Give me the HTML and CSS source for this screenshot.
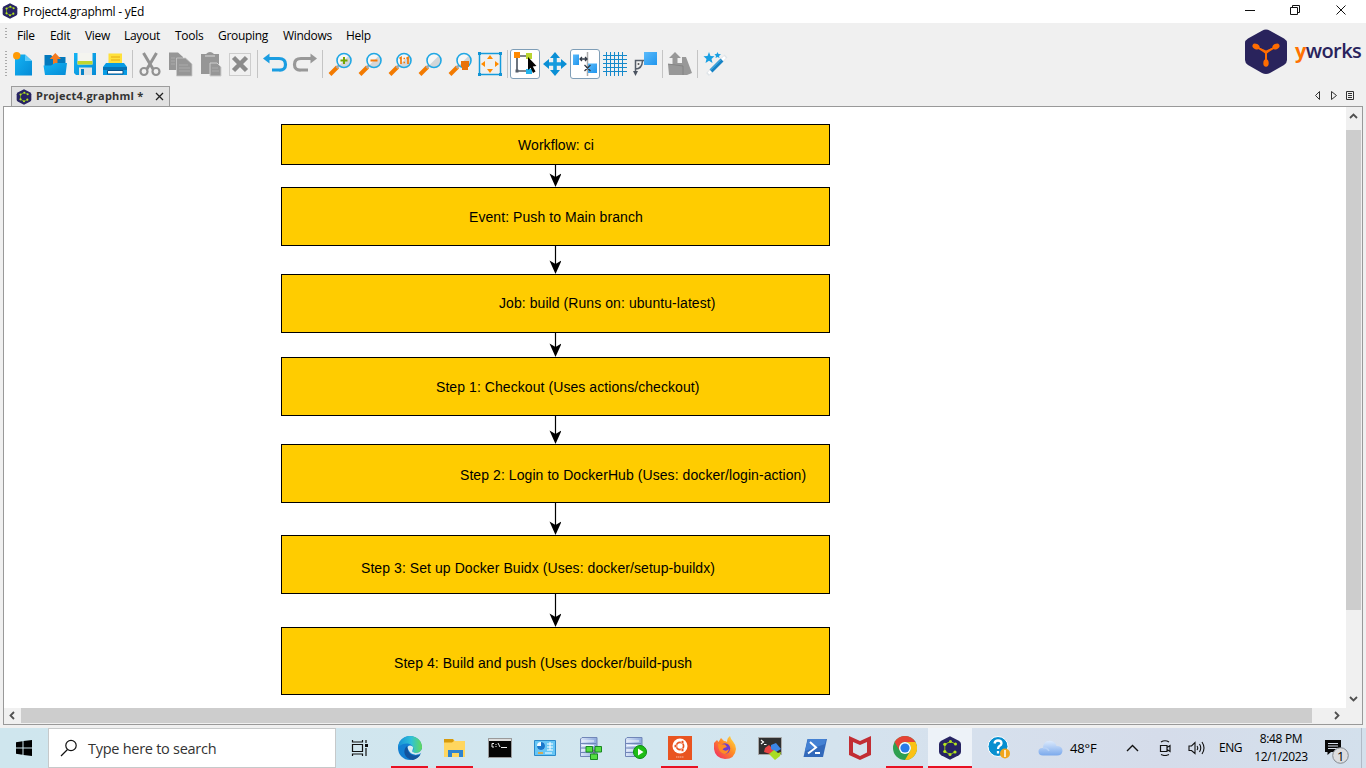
FILE: index.html
```
<!DOCTYPE html>
<html lang="en">
<head>
<meta charset="utf-8">
<title>Project4.graphml - yEd</title>
<link rel="stylesheet" href="styles.css">
</head>
<body>
<svg class="defs" width="0" height="0">
  <defs>
    <linearGradient id="blue" x1="0" y1="0" x2="1" y2="1"><stop offset="0" stop-color="#14b4f4"/><stop offset="1" stop-color="#058bd6"/></linearGradient>
    <linearGradient id="sky" x1="0" y1="0" x2="1" y2="1"><stop offset="0" stop-color="#5abafa"/><stop offset="1" stop-color="#2196ee"/></linearGradient>
    <linearGradient id="edgeA" x1="0" y1="0" x2="1" y2="0"><stop offset="0" stop-color="#168fd8"/><stop offset=".55" stop-color="#2fc1d8"/><stop offset="1" stop-color="#62d95a"/></linearGradient>
    <linearGradient id="fox" x1="1" y1="0" x2="0" y2="1"><stop offset="0" stop-color="#ffe545"/><stop offset=".45" stop-color="#ff8a25"/><stop offset="1" stop-color="#f0206c"/></linearGradient>
    <linearGradient id="cloud" x1="0" y1="0" x2="0" y2="1"><stop offset="0" stop-color="#dceafc"/><stop offset="1" stop-color="#7ba9ec"/></linearGradient>
    <linearGradient id="server" x1="0" y1="0" x2="1" y2="0"><stop offset="0" stop-color="#dbe6f8"/><stop offset="1" stop-color="#8da9dd"/></linearGradient>
    <symbol id="yed" viewBox="0 0 24 24">
      <path d="M12 .2 20.800 4.800Q23 6 23 8V16Q23 18 20.800 19.200L12 23.800 3.200 19.200Q1 18 1 16V8Q1 6 3.200 4.800Z" fill="#272463"/>
      <path d="M17.500 8 12.500 5.500 6.800 8.300V15.500L12 18.500 17 16" fill="none" stroke="#8fb81f" stroke-width="1"/>
      <g fill="#b5e61d"><circle cx="12.500" cy="5.500" r="1.500"/><circle cx="6.800" cy="8.300" r="1.600"/><circle cx="6.800" cy="15.500" r="1.600"/><circle cx="12" cy="18.500" r="1.500"/><circle cx="17" cy="16" r="1.600"/><circle cx="17.500" cy="8" r="1.500"/></g>
    </symbol>
    <symbol id="lens" viewBox="0 0 30 30">
      <path d="M5 25.500 12.500 18" stroke="#f37a00" stroke-width="4"/>
      <path d="M11.500 19 14 16.500" stroke="#a9a9a9" stroke-width="2.500"/>
      <circle cx="19" cy="11.500" r="7" fill="#f5f6f6"/>
      <path d="M24 6.500A7 7 0 0 1 14 16.500Z" fill="#d3d6d8"/>
      <circle cx="19" cy="11.500" r="7" fill="none" stroke="#20a7e4" stroke-width="1.600"/>
    </symbol>
    <symbol id="srv" viewBox="0 0 24 24">
      <path d="M2.500 3 4 1.500H19V18L17 20.500H2.500Z" fill="url(#server)" stroke="#7186b8"/>
      <path d="M2.500 7.500H18M2.500 12H18M2.500 16.500H18" stroke="#7186b8"/><path d="M4 5H16M4 9.500H16M4 14H16" stroke="#f1f6ff"/>
    </symbol>
  </defs>
</svg>
<div class="app">
  <header class="titlebar">
    <svg class="app-icon" width="16" height="16"><use href="#yed"/></svg>
    <span class="title">Project4.graphml - yEd</span>
    <svg class="win-controls" width="120" height="23" viewBox="0 0 120 23" fill="none" stroke="#111" stroke-width="1">
      <path d="M0 10.500H10"/><path d="M45.500 7.500H52.500V14.500H45.500ZM47.500 7.500V5.500H54.500V12.500H52.500"/><path d="M91.500 5.500 100.500 14.500M100.500 5.500 91.500 14.500"/>
    </svg>
  </header>

  <div class="chrome">
    <div class="bars">
      <nav class="menubar">
        <span class="grip short"></span>
        <span class="m-file">File</span><span class="m-edit">Edit</span><span class="m-view">View</span><span class="m-layout">Layout</span><span class="m-tools">Tools</span><span class="m-group">Grouping</span><span class="m-win">Windows</span><span>Help</span>
      </nav>
      <div class="toolbar">
        <span class="grip"></span>
        <svg viewBox="0 0 30 30"><path d="M5 5.500H15L22 12V26.500H5Z" fill="url(#blue)"/><path d="M15 5.500 22 12H15Z" fill="#58cafa"/><circle cx="6.700" cy="6.700" r="3.700" fill="#ff9b05"/></svg>
        <svg viewBox="0 0 30 30"><path d="M4.500 6H11L13 8H25.500V15L4.500 19Z" fill="#0379bd"/><path d="M15.300 4 21 10H17.500V15H13V10H9.700Z" fill="#f47b20"/><path d="M3.500 16.500H11L15 14H27L25.500 26H5Z" fill="url(#blue)"/></svg>
        <svg viewBox="0 0 30 30"><path d="M4 4H26V26H6L4 24Z" fill="url(#blue)"/><path d="M7.500 4H22.500V15.500H7.500Z" fill="#f4f4ef"/><path d="M7.500 12H22.500V15.500H7.500Z" fill="#c1d62e"/><path d="M9 18.500H22V26H9Z" fill="#e0e3e5"/><path d="M11 20H14V26H11Z" fill="#0681c7"/></svg>
        <svg viewBox="0 0 30 30"><path d="M8.500 4.500H22V15H8.500Z" fill="#ffe13b"/><path d="M11 8H20M11 11H20" stroke="#e5aa18"/><path d="M6 14H24L27 18V26H3V18Z" fill="#079be4"/><path d="M3 18H27V21H3Z" fill="#0673b6"/><path d="M7.500 21.500H23V25H7.500Z" fill="#fff" stroke="#08538c"/></svg>
        <i class="sep"></i>
        <svg viewBox="0 0 30 30" fill="none" stroke="#929292" stroke-width="2.200"><path d="M8.500 4 18 20M21.500 4 12 20" stroke-width="3"/><circle cx="9" cy="22.500" r="3.500"/><circle cx="21" cy="22.500" r="3.500"/></svg>
        <svg viewBox="0 0 30 30" fill="#969696"><path d="M4 3.500H13L18 8V21H4Z"/><path d="M11.500 9H20.500L27 15V27H11.500Z" stroke="#c9c9c9" stroke-width=".8"/><path d="M6 9H10M6 12H10M6 15H10M14 16H23M14 19H25M14 22H25" stroke="#aaa"/></svg>
        <svg viewBox="0 0 30 30" fill="#969696"><path d="M6 5H11Q15 1 19 5H24V25H6Z"/><path d="M10 7H20" stroke="#c2c2c2" stroke-width="1.500"/><path d="M15 14H22L26 18V27H15Z" stroke="#cdcdcd"/><path d="M17 19H23M17 22H24" stroke="#aaa"/></svg>
        <svg viewBox="0 0 30 30" fill="none"><path d="M4.500 4.500H25.500V26.500H4.500Z" stroke="#aaa" stroke-dasharray="1 1"/><path d="M8.500 8.500 21.500 21.500M21.500 8.500 8.500 21.500" stroke="#8b8b8b" stroke-width="4.500"/></svg>
        <i class="sep"></i>
        <svg viewBox="0 0 30 30"><path d="M8 9.500H19Q25.500 9.500 25.500 15.500T19 21H12" fill="none" stroke="#1b9de1" stroke-width="3.200"/><path d="M9.500 4.500V14.500L3 9.500Z" fill="#1b9de1"/></svg>
        <svg viewBox="0 0 30 30"><path d="M22 9.500H11Q4.500 9.500 4.500 15.500T11 21H18" fill="none" stroke="#989898" stroke-width="3.200"/><path d="M20.500 4.500V14.500L27 9.500Z" fill="#989898"/></svg>
        <i class="sep"></i>
        <svg viewBox="0 0 30 30"><use href="#lens"/><path d="M15.500 11.500H22.500M19 8V15" stroke="#72a400" stroke-width="2"/></svg>
        <svg viewBox="0 0 30 30"><use href="#lens"/><path d="M15.500 11.500H22.500" stroke="#f27909" stroke-width="2"/></svg>
        <svg viewBox="0 0 30 30"><use href="#lens"/><path d="M14.500 9.500 16 8.500V15M21.500 9.500 23 8.500V15" fill="none" stroke="#f27909" stroke-width="1.700"/><path d="M18.500 9.500H20M18.500 13.500H20" stroke="#f27909" stroke-width="1.500"/></svg>
        <svg viewBox="0 0 30 30"><use href="#lens"/></svg>
        <svg viewBox="0 0 30 30"><use href="#lens"/><path d="M16 12H24V18H23V21H17V18H16Z" fill="#e9710a"/></svg>
        <svg viewBox="0 0 30 30"><path d="M4.500 4.500H25.500V25.500H4.500Z" fill="none" stroke="#149bdc" stroke-width="1.500"/><path d="M3 3H6V6H3ZM24 3H27V6H24ZM3 24H6V27H3ZM24 24H27V27H24Z" fill="#1293d4"/><path d="M12 10H18L15 6ZM12 20H18L15 24ZM10 12V18L6 15ZM20 12V18L24 15Z" fill="#ff8b00"/></svg>
        <i class="sep"></i>
        <svg viewBox="0 0 30 30"><rect x=".5" y=".5" width="29" height="29" rx="2.500" fill="#fff" stroke="#7f9eb7"/><path d="M7 7H19V22H7Z" fill="none" stroke="#555d68" stroke-width="1.700"/><path d="M4 3H10V9H4Z" fill="#ff8900"/><path d="M16 4H22V10H16Z" fill="#b9d432"/><path d="M16 20H22V25H16Z" fill="#22b4ed"/><path d="M5.500 20.500H8.500V23.500H5.500Z" fill="#555d68"/><path d="M18 8 26.500 17 22.800 17.500 25.500 22.500 23 24 20.500 18.800 18 21Z" fill="#050505"/></svg>
        <svg viewBox="0 0 30 30"><path d="M15 7V23M7 15H23" stroke="#169bde" stroke-width="3.600"/><path d="M10 9H20L15 3ZM10 21H20L15 27ZM9 10V20L3 15ZM21 10V20L27 15Z" fill="#0b8fd5"/></svg>
        <svg viewBox="0 0 30 30"><rect x=".5" y=".5" width="29" height="29" rx="2.500" fill="#fff" stroke="#7f9eb7"/><path d="M17.500 3V27" stroke="#aaa" stroke-width="1.500"/><path d="M3 5.500H9V16H3Z" fill="url(#sky)"/><path d="M18 14.500H27V24H18Z" fill="url(#sky)"/><path d="M10 10H17M12 8 10 10 12 12M15 8 17 10 15 12M14.500 16 20.500 22M20.500 16 14.500 22" fill="none" stroke="#333b47" stroke-width="1.300"/></svg>
        <svg viewBox="0 0 30 30"><path d="M6.500 3V27M10.500 3V27M14.500 3V27M18.500 3V27M22.500 3V27M3 6.500H27M3 10.500H27M3 14.500H27M3 18.500H27M3 22.500H27" stroke="#1589cb"/></svg>
        <svg viewBox="0 0 30 30"><path d="M14 3H27V16H14Z" fill="url(#sky)"/><path d="M14 11.500H5.500V24M5.500 20Q12 20 12.500 12" fill="none" stroke="#555d68" stroke-width="1.500"/><path d="M3 22H8L5.500 27Z" fill="#4b5360"/><circle cx="8.500" cy="15" r="1" fill="#555"/></svg>
        <i class="sep"></i>
        <svg viewBox="0 0 30 30" fill="#989898"><path d="M10 3 16 9H12.500V14H17V8H21L27 24 22 26H4L3 15H7.500V9H4Z"/><path d="M3 15 18 17V26" fill="none" stroke="#7f7f7f" stroke-width=".8"/></svg>
        <i class="sep"></i>
        <svg viewBox="0 0 30 30"><path d="M9 3 10.500 7 14.500 7.200 11.500 10 12.500 14 9 11.800 5.500 14 6.500 10 3.500 7.200 7.500 7ZM17.500 3 18.500 5 21 5.300 19 7 19.500 9 17.500 8 15.500 9 16 7 14.500 5.300 16.500 5Z" fill="#189fe2"/><path d="M7.500 25.500 26 7" stroke="#dfe4e8" stroke-width="4"/><path d="M8.500 24.500 25 8" stroke="#fff" stroke-width="2.500"/><path d="M11 22 22 11" stroke="#1682c4" stroke-width="4"/><path d="M10.500 21 21 10.500" stroke="#5bc1f4" stroke-width="1"/></svg>
      </div>
    </div>
    <div class="brand">
      <svg width="44" height="46" viewBox="0 0 44 46"><path d="M22 .5Q24 .5 26 1.700L40 9.500Q43 11.300 43 14V31Q43 34 40 36L26 44Q22 46 18 44L4 36Q1 34 1 31V14Q1 11.300 4 9.500L18 1.700Q20 .5 22 .5Z" fill="#29235c"/><path d="M12 17.500 22 23.500 32 17.500M22 23.500V34" fill="none" stroke="#ff6c00" stroke-width="2"/><path d="M15 18.500 22 21.500 29 18.500 23 24.500V29H21V24.500Z" fill="#ff6c00"/><g fill="#ff6c00"><ellipse cx="12" cy="17.500" rx="3.700" ry="2.700" transform="rotate(28 12 17.500)"/><ellipse cx="32" cy="17.500" rx="3.700" ry="2.700" transform="rotate(-28 32 17.500)"/><ellipse cx="22" cy="34" rx="2.700" ry="3.800"/></g></svg>
      <span class="wordmark"><b>y</b>works</span>
    </div>
  </div>

  <div class="tabs">
    <div class="tab">
      <svg width="16" height="16"><use href="#yed"/></svg>
      <span>Project4.graphml *</span>
      <svg class="close" width="9" height="9" viewBox="0 0 9 9"><path d="M1 1 8 8M8 1 1 8" stroke="#222" stroke-width="1.300"/></svg>
    </div>
    <svg class="tab-nav" width="44" height="12" viewBox="0 0 44 12" fill="none" stroke="#333"><path d="M6.500 1.500V9.500L2.500 5.500ZM18.500 1.500V9.500L23.500 5.500ZM33.500 1.500H40.500V9.500H33.500ZM35 3.500H39M35 5.500H39M35 7.500H39"/></svg>
  </div>

  <main class="editor">
    <div class="canvas">
      <div class="node n1"><span>Workflow: ci</span></div>
      <div class="node n2"><span>Event: Push to Main branch</span></div>
      <div class="node n3"><span>Job: build (Runs on: ubuntu-latest)</span></div>
      <div class="node n4"><span>Step 1: Checkout (Uses actions/checkout)</span></div>
      <div class="node n5"><span>Step 2: Login to DockerHub (Uses: docker/login-action)</span></div>
      <div class="node n6"><span>Step 3: Set up Docker Buidx (Uses: docker/setup-buildx)</span></div>
      <div class="node n7"><span>Step 4: Build and push (Uses docker/build-push</span></div>
      <svg class="edges" width="12" height="601" viewBox="0 0 12 601">
        <defs><path id="head" d="M0 -13.500 6 -10 12 -13.500 6 0Z"/></defs>
        <path d="M6.500 58V72M6.500 139V158M6.500 226V242M6.500 309V328M6.500 396V419M6.500 487V511" stroke="#000" stroke-width="1.200"/>
        <use href="#head" x=".5" y="80"/><use href="#head" x=".5" y="167"/><use href="#head" x=".5" y="250"/><use href="#head" x=".5" y="337"/><use href="#head" x=".5" y="428"/><use href="#head" x=".5" y="520"/>
      </svg>
    </div>
    <div class="vbar">
      <svg width="15" height="23" viewBox="0 0 15 23"><path d="M4 11 7.500 7.500 11 11" fill="none" stroke="#505050" stroke-width="1.800"/></svg>
      <div class="vthumb"></div>
      <svg width="15" height="18" viewBox="0 0 15 18"><path d="M4 7 7.500 10.500 11 7" fill="none" stroke="#505050" stroke-width="1.800"/></svg>
    </div>
    <div class="hbar">
      <svg width="17" height="15" viewBox="0 0 17 15"><path d="M10 4 6.500 7.500 10 11" fill="none" stroke="#505050" stroke-width="1.800"/></svg>
      <div class="hthumb"></div>
      <svg width="49" height="15" viewBox="0 0 49 15"><path d="M23 4 26.500 7.500 23 11" fill="none" stroke="#505050" stroke-width="1.800"/></svg>
    </div>
  </main>

  <footer class="taskbar">
    <div class="start"><svg width="16" height="16" viewBox="0 0 16 16"><path d="M0 2.200 6.500 1.300V7.500H0ZM7.500 1.100 16 0V7.500H7.500ZM0 8.500H6.500V14.700L0 13.800ZM7.500 8.500H16V16L7.500 14.900Z"/></svg></div>
    <div class="search"><svg width="18" height="18" viewBox="0 0 18 18" fill="none" stroke="#111" stroke-width="1.200"><circle cx="11" cy="6.500" r="5.200"/><path d="M7.500 10.500 1 17"/></svg><span>Type here to search</span></div>
    <div class="taskview"><svg width="18" height="16" viewBox="0 0 18 16" fill="none" stroke="#111" stroke-width="1.200"><path d="M1.500 4.500H11.500V11.500H1.500ZM1.500 0V2H11.500V0M1.500 16V14H11.500V16M15 0V3M15 8V16"/><path d="M14 4H17V7H14Z" fill="#111" stroke="none"/></svg></div>
    <div class="apps">
      <div class="task open"><svg viewBox="0 0 24 24"><circle cx="12" cy="12" r="12" fill="#127fd2"/><path d="M0 11C1 4 6 0 12 0 19 0 24 5 24 11 24 15 21 17 17 17 13 17 15 15 15.500 13 15 7 7 5 0 11Z" fill="url(#edgeA)"/><path d="M9 10C4 14 6 23 15 24 19 23 21 21 22.500 18.500 17 21 10 19 10 13Z" fill="#13549d"/><path d="M10 13C8.500 10 12 8.500 14.500 10.500 16 12 14 14 14.500 16L19 18.500Q12 19 10 13Z" fill="#d9edf2"/><path d="M24 16.500Q21 18.800 17 18.800L14.500 16Q16 17.200 18 17 22 17 24 13Z" fill="#d1e5ed"/></svg></div>
      <div class="task open"><svg viewBox="0 0 24 24"><path d="M1 3H10L12 5H22V21H1Z" fill="#ffd65f"/><path d="M1 3H10L11 5 9 6.500H1Z" fill="#d79a0c"/><path d="M5 14H20V21H16V17H9V21H5Z" fill="#2e83ce"/></svg></div>
      <div class="task"><svg viewBox="0 0 24 24"><path d="M.5 2.500H23.500V21.500H.5Z" fill="#050505" stroke="#9a9a9a"/><path d="M1 3H23V5H1Z" fill="#ddd"/><path d="M6 7.500H4V11H6M8 8V9M8 10V11M10 7 12 11M13 11.500H19" fill="none" stroke="#eee"/></svg></div>
      <div class="task"><svg viewBox="0 0 24 24"><path d="M1.500 4.500H22.500V19.500H1.500Z" fill="#67c6f5" stroke="#2b8acb"/><circle cx="8" cy="10" r="4" fill="#f4faff"/><path d="M8 10V6A4 4 0 1 1 4 10Z" fill="#1978cc"/><path d="M14 8H20M14 11H20M14 14H20M17 6V14" stroke="#fff"/><path d="M5 17H10" stroke="#f4a228" stroke-width="1.500"/><path d="M12 17H19" stroke="#fff"/></svg></div>
      <div class="task"><svg viewBox="0 0 24 24"><use href="#srv"/><path d="M11 14H20M16 14V20" stroke="#555"/><path d="M8 10.500H14.500V16H8ZM17 10.500H23.500V16H17ZM12.500 18H19.500V23.500H12.500Z" fill="#55dd42" stroke="#198823"/></svg></div>
      <div class="task"><svg viewBox="0 0 24 24"><use href="#srv"/><circle cx="17" cy="16" r="6.500" fill="#1ebd16" stroke="#0a8c12"/><path d="M15 12.500 20.500 16 15 19.500Z" fill="#fff"/></svg></div>
      <div class="task open"><svg viewBox="0 0 24 24"><path d="M0 0H24V24H0Z" fill="#e95420"/><circle cx="12" cy="10" r="7.500" fill="#fff"/><circle cx="12" cy="10" r="3.600" fill="none" stroke="#e95420" stroke-width="1.700"/><g fill="#e95420" stroke="#fff" stroke-width=".5"><circle cx="7.500" cy="10" r="1.500"/><circle cx="14.500" cy="6" r="1.500"/><circle cx="14.500" cy="14" r="1.500"/></g><path d="M8 21H16" stroke="#f9b49d" stroke-dasharray="1.500 .5"/></svg></div>
      <div class="task"><svg viewBox="0 0 24 24"><path d="M1 7 4 4 5.500 6 8 2 11 5Q13 5 14 6 14 2 17 0 18 4 20 5.500 23 9 23 13 22 23 12 23 2 22 1 13Z" fill="url(#fox)"/><circle cx="12" cy="12.500" r="5.200" fill="#6e3cd0"/><path d="M5 8 12 8.500 14 11 11 12 9.500 13.500Q13 16 16 13 15 18 11 18 5 16 5 8Z" fill="#ff8c24"/></svg></div>
      <div class="task"><svg viewBox="0 0 24 24"><path d="M.5 1.500H23.500V18.500H.5Z" fill="#303030" stroke="#a9a9a9"/><path d="M3 4 5.500 6 3 8M6 8.500H8.500" fill="none" stroke="#fff" stroke-width="1.200"/><path d="M7 12 11 9 14 12 16 15 12 18 6 16Z" fill="#e94343"/><path d="M13 9 18 7 23 13 18 16 13 13Z" fill="#3c87e6"/><path d="M11 18 16 14 20 17 23 16 22 20 17 24Z" fill="#a9dc23"/></svg></div>
      <div class="task"><svg viewBox="0 0 24 24"><path d="M4.500 3H24L20 21H.5Z" fill="#3269ba"/><path d="M5 3H23L22 8 2 15Z" fill="#4481d3"/><path d="M7 6 13 11.500 5 17.500M12 17H17" fill="none" stroke="#fff" stroke-width="2"/></svg></div>
      <div class="task"><svg viewBox="0 0 24 24"><path d="M1 0 12 5 23 0V19L12 24 1 19ZM5 6V16.500L12 20 19 16.500V6L12 9Z" fill="#c22d33" fill-rule="evenodd"/></svg></div>
      <div class="task open"><svg viewBox="0 0 24 24"><circle cx="12" cy="12" r="12" fill="#2f9f50"/><path d="M1.600 6A12 12 0 0 1 22.400 6H12A6 6 0 0 0 6.800 15Z" fill="#e54335"/><path d="M22.400 6A12 12 0 0 1 12 24L17.200 15A6 6 0 0 0 12 6Z" fill="#fbc115"/><circle cx="12" cy="12" r="6" fill="#fff"/><circle cx="12" cy="12" r="4.600" fill="#287be8"/></svg></div>
      <div class="task open active"><svg><use href="#yed"/></svg></div>
    </div>
    <svg class="help" width="24" height="24" viewBox="0 0 24 24"><circle cx="11" cy="10.500" r="10" fill="#078fd0" stroke="#fff"/><path d="M7.500 7.500Q8 4.500 11 4.500 14.500 4.500 14.500 7.500 14.500 9 12.500 10 11 11 11 13M11 15V17.500" fill="none" stroke="#fff" stroke-width="2.300"/><circle cx="18" cy="17.500" r="5" fill="#f1a51c"/><path d="M18 14V21" stroke="#fff" stroke-width="1.500"/></svg>
    <svg class="cloud" width="25" height="16" viewBox="0 0 25 16"><path d="M5 15.500Q.5 15.500 .5 11.500T5 8Q5 1 12 .7 17 1 18.500 6 24.500 6 24.500 11 24 15.500 19 15.500Z" fill="url(#cloud)"/><path d="M5 8Q9 7 11 11" fill="none" stroke="#b8d2f6" stroke-width="1.500"/></svg>
    <span class="temp">48°F</span>
    <svg class="chev" width="13" height="8" viewBox="0 0 13 8"><path d="M1 7 6.500 1.500 12 7" fill="none" stroke="#111" stroke-width="1.400"/></svg>
    <svg class="meet" width="12" height="16" viewBox="0 0 12 16" fill="none" stroke="#111" stroke-width="1.200"><path d="M1.500 5.500H8V11.500H1.500ZM8 7.500 11 5.500V11.500L8 9.500M2 2Q6-.5 10 2M2 14.500Q6 16.500 10 14.500"/></svg>
    <svg class="sound" width="18" height="14" viewBox="0 0 18 14" fill="none" stroke="#111" stroke-width="1.100"><path d="M1 5H3.500L7 1.500V12.500L3.500 9.500H1ZM9 5Q10.500 7 9 9M11.500 3Q14 7 11.500 11M14 1Q18 7 14 13"/></svg>
    <span class="lang">ENG</span>
    <div class="clock"><span class="time">8:48 PM</span><span class="date">12/1/2023</span></div>
    <div class="notice"><svg width="25" height="25" viewBox="0 0 25 25"><path d="M1 1H17V13H7L3.500 16V13H1Z" fill="#090909"/><path d="M4 4.500H14M4 7H14M4 9.500H14" stroke="#d8e0ec"/><circle cx="16.500" cy="16.500" r="7.800" fill="#dcdddf" stroke="#858b91"/></svg><span class="count">1</span></div>
    <div class="peek"></div>
  </footer>
</div>
</body>
</html>
```

FILE: styles.css
```
* { box-sizing: border-box; }
body { margin: 0; overflow: hidden; background: #f0f0f0; color: #000; font: 12px/16px "Open Sans", "Noto Sans", sans-serif; }
svg { display: block; flex: none; }
.defs { position: absolute; }
.app { width: 1366px; height: 768px; display: flex; flex-direction: column; }

.titlebar { height: 23px; flex: none; background: #fff; display: flex; align-items: center; padding-left: 2px; }
.app-icon { margin-bottom: 1px; }
.title { margin-left: 5px; font-size: 12px; letter-spacing: -.23px; white-space: nowrap; }
.win-controls { margin-left: auto; margin-right: 1px; }

.chrome { height: 59px; flex: none; display: flex; }
.bars { width: 1242px; }
.menubar { height: 25px; display: flex; align-items: center; white-space: nowrap; letter-spacing: -.3px; }
.grip { width: 2px; height: 26px; margin: 0 3px 0 5px; background: repeating-linear-gradient(#aaa 0 1px, transparent 1px 3px); }
.grip.short { height: 11px; margin-right: 10px; margin-bottom: 4px; }
.m-file { width: 33px; } .m-edit { width: 35px; } .m-view { width: 39px; } .m-layout { width: 51px; }
.m-tools { width: 43px; } .m-group { width: 65px; } .m-win { width: 63px; }
.toolbar { height: 32px; display: flex; align-items: center; }
.toolbar svg { width: 30px; height: 30px; }
.sep { width: 1px; height: 28px; margin: 0 2px; background: #c4c4c4; flex: none; }
.brand { display: flex; padding: 6px 0 0 2px; }
.wordmark { margin: 8px 0 0 7px; font: 600 20px/28px "Open Sans", sans-serif; letter-spacing: -.6px; color: #29235c; white-space: nowrap; }
.wordmark b { color: #ff7200; font-weight: 700; }

.tabs { height: 24px; flex: none; display: flex; justify-content: space-between; padding: 4px 9px 0 11px; }
.tab { width: 159px; height: 20px; display: flex; align-items: center; padding-left: 4px; background: #e2e2e2; border: 1px solid #9c9c9c; border-bottom: 0; font: bold 11px/16px "Open Sans", sans-serif; letter-spacing: .22px; color: #333; white-space: nowrap; }
.tab span { margin: -2px 0 0 4px; width: 119px; }
.tab-nav { margin-top: 4px; }

.editor { width: 1360px; height: 619px; flex: none; margin-left: 3px; border: 1px solid #999; background: #f0f0f0; display: grid; grid-template-columns: 1342px 15px; grid-template-rows: 601px 15px; }
.canvas { position: relative; background: #fff; overflow: hidden; }
.vbar { display: flex; flex-direction: column; }
.vthumb { height: 480px; background: #cdcdcd; margin-bottom: 80px; flex: none; }
.hbar { display: flex; grid-column: 1 / 3; }
.hthumb { width: 1291px; background: #cdcdcd; }
.node { position: absolute; left: 277px; width: 549px; border: 1px solid #000; background: #fc0; display: flex; align-items: center; font: 14px/16px "Liberation Sans", Arial, sans-serif; letter-spacing: .07px; white-space: nowrap; }
.n1 { top: 17px; height: 41px; padding-left: 236px; }
.n2 { top: 80px; height: 59px; padding-left: 187px; }
.n3 { top: 167px; height: 59px; padding: 0 0 2px 217px; }
.n4 { top: 250px; height: 59px; padding-left: 154px; }
.n5 { top: 337px; height: 59px; padding: 2px 0 0 178px; }
.n6 { top: 428px; height: 59px; padding: 6px 0 0 79px; }
.n7 { top: 520px; height: 68px; padding: 4px 0 0 112px; letter-spacing: .05px; }
.edges { position: absolute; left: 545px; top: 0; }

.taskbar { height: 40px; flex: none; margin-top: 3px; display: flex; align-items: center; background: linear-gradient(90deg, #cfe6ee 0, #d2e6ef 50%, #d6e0ed 72%, #d5dcea 85%, #d3e0ec 100%); white-space: nowrap; }
.start { width: 48px; padding-left: 16px; }
.search { width: 288px; height: 40px; border: 1px solid #c6c9ca; background: #fff; display: flex; align-items: center; padding-left: 11px; font-size: 14.500px; color: #333; letter-spacing: -.27px; }
.search span { margin: 2px 0 0 10px; }
.taskview { width: 51px; padding-left: 15px; }
.apps { display: flex; height: 40px; }
.task { width: 45px; height: 40px; display: flex; justify-content: center; padding-top: 8px; background-repeat: no-repeat; }
.task svg { width: 24px; height: 24px; }
.task.open { background-image: linear-gradient(#e81123, #e81123); background-size: 37px 2px; background-position: 50% 100%; }
.task.active { background-color: #edf2f8; background-size: 100% 2px; width: 44px; margin-left: 1px; }
.help { margin-left: 15px; }
.cloud { margin-left: 27px; }
.temp { width: 56px; margin-left: 7px; font-size: 13px; letter-spacing: -.15px; }
.chev { width: 13px; }
.meet { margin-left: 20px; }
.sound { margin-left: 17px; }
.lang { width: 27px; margin-left: 13px; font-size: 12px; letter-spacing: -.5px; }
.clock { width: 60px; margin-left: 5px; display: flex; flex-direction: column; align-items: center; font-size: 12px; line-height: 18px; letter-spacing: -.35px; }
.notice { position: relative; margin: 6px 0 0 13px; }
.count { position: absolute; left: 13px; top: 9px; font-size: 13px; }
.peek { width: 1px; height: 40px; margin-left: auto; margin-right: 4px; background: #b1bac7; }
```
